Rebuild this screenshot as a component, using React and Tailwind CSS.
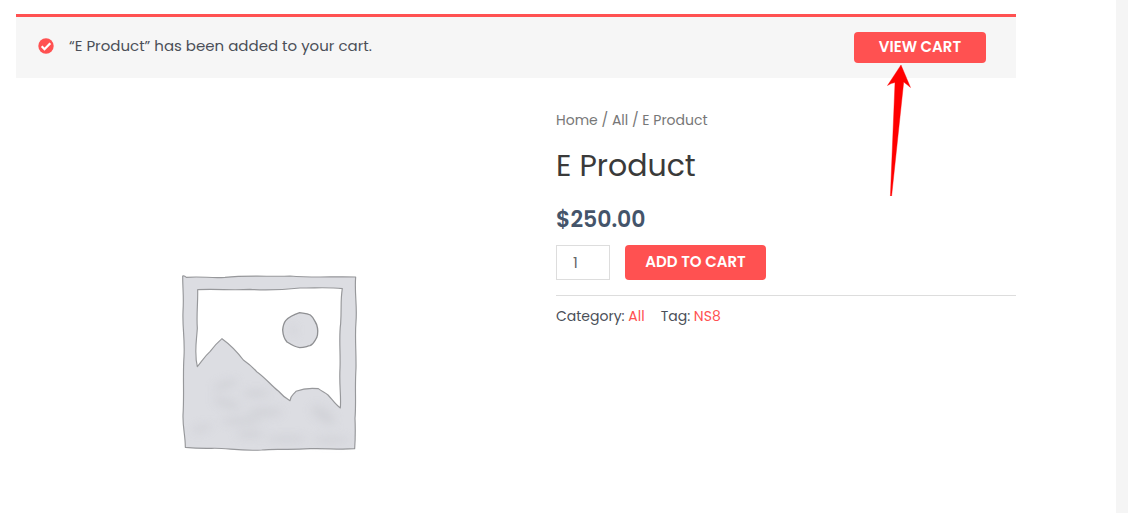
import React from "react";

function CheckBadge() {
  return (
    <svg viewBox="0 0 16 16" className="size-4 shrink-0" aria-hidden="true">
      <circle cx="8" cy="8" r="7.7" fill="#ff5151" />
      <path d="M3.7 8.3l2.8 2.9 5.8-6" fill="none" stroke="#fff" strokeWidth="2.3" />
    </svg>
  );
}

function PointerArrow() {
  return (
    <svg
      viewBox="0 0 26 132"
      className="pointer-events-none absolute top-8 left-8 h-[132px] w-[26px]"
      aria-hidden="true"
    >
      <path
        d="M15 1L24.5 23.5Q21 20.500 17.700 18L5.600 132H4.400L9 18.500Q5 19 1.500 21.500Z"
        fill="#f00"
        stroke="#f00"
        strokeWidth=".4"
      />
    </svg>
  );
}

function PlaceholderImage() {
  return (
    <svg viewBox="0 0 600 585" className="h-[195px] w-[200px]" role="img" aria-label="Awaiting product image">
      <defs>
        <filter id="soft" x="-40%" y="-80%" width="180%" height="260%">
          <feGaussianBlur stdDeviation="12" />
        </filter>
      </defs>
      <path
        d="M38 33Q43 31 49 37C95 33 120 40 165 37C235 30 310 36 360 33C430 39 490 34 557 36C553 85 562 120 558 170C554 215 559 260 558 310C554 370 559 410 555 460Q557 505 554 551C505 555 470 549 420 551C350 556 315 550 275 555C205 559 170 548 125 550Q85 551 46 547C46 510 38 490 39 450C43 390 38 330 42 275C45 220 37 190 39 140C42 95 38 75 38 33Z M83 74C84 115 79 150 82 190C79 235 72 265 82 305C95 290 102 276 120 260Q138 236 156 221C178 237 200 258 220 285Q242 300 260 320C283 335 304 362 325 378C337 392 346 399 360 407C361 392 368 391 378 379C393 373 410 367 445 371C455 379 465 383 474 390C486 402 495 418 511 429C514 390 507 360 510 310C512 260 506 220 512 175C515 130 511 105 517 71C475 66 445 69 390 69C340 74 300 77 240 73C185 77 145 71 83 74Z"
        fill="#dcdde2"
        stroke="#97989b"
        strokeWidth="3.500"
        strokeLinejoin="round"
        fillRule="evenodd"
      />
      <path
        d="M389 143C400 145 410 144 421 150C432 158 434 168 440 179C444 191 444 207 440 218C434 228 431 238 420 242C407 245 402 248 389 248C374 246 362 238 351 231C341 220 339 210 338 195C339 184 340 176 347 167C359 153 370 149 389 143Z"
        fill="#dcdde2"
        stroke="#8f9093"
        strokeWidth="4"
      />
      <g filter="url(#soft)" fill="#cbccd1" opacity=".55">
        <ellipse cx="165" cy="360" rx="38" ry="12" transform="rotate(-20 165 360)" />
        <ellipse cx="258" cy="385" rx="40" ry="12" />
        <ellipse cx="170" cy="415" rx="42" ry="14" transform="rotate(18 170 415)" />
        <ellipse cx="285" cy="442" rx="52" ry="14" />
        <ellipse cx="215" cy="468" rx="60" ry="12" />
        <ellipse cx="460" cy="450" rx="42" ry="20" transform="rotate(35 460 450)" />
        <ellipse cx="240" cy="508" rx="42" ry="12" />
        <ellipse cx="350" cy="522" rx="60" ry="11" />
        <ellipse cx="485" cy="525" rx="55" ry="10" />
        <ellipse cx="95" cy="490" rx="30" ry="10" transform="rotate(-15 95 490)" />
        <ellipse cx="370" cy="195" rx="7" ry="20" />
      </g>
    </svg>
  );
}

export default function App() {
  return (
    <div className="flex min-h-screen bg-[#f5f5f5] pr-3 font-['Poppins','Inter',sans-serif] text-[#4b4f58]">
      <main className="flex-1 bg-white pt-3.5 pr-[100px] pl-4">
        <div
          role="alert"
          className="flex items-start justify-between border-t-3 border-[#ff5151] bg-[#f6f6f6] pt-[15px] pr-[30px] pb-[15px] pl-[22px]"
        >
          <div className="flex items-center gap-[15px] text-[15px] leading-7">
            <CheckBadge />
            <p>“E Product” has been added to your cart.</p>
          </div>
          <div className="relative">
            <a
              href="#cart"
              className="flex h-[31px] w-[132px] items-center justify-center rounded bg-[#ff5151] text-[15px] font-semibold text-white"
            >
              VIEW CART
            </a>
            <PointerArrow />
          </div>
        </div>

        <div className="grid grid-cols-[11fr_10fr] gap-x-[34px] pt-8">
          <div className="flex justify-center pt-[155px] pl-0.5">
            <PlaceholderImage />
          </div>

          <section>
            <nav aria-label="Breadcrumb" className="text-sm leading-5 text-[#777]">
              <a href="#home">Home</a> / <a href="#all">All</a> / E Product
            </nav>
            <h1 className="mt-4 text-[30px] leading-10 font-normal text-[#3a3a3a]">E Product</h1>
            <p className="mt-[18px] text-[22px] leading-8 font-semibold text-[#44546a]">$250.00</p>
            <form className="mt-[9px] flex gap-[15px]" onSubmit={(e) => e.preventDefault()}>
              <input
                type="number"
                min="1"
                defaultValue="1"
                aria-label="Product quantity"
                className="h-[35px] w-[54px] [appearance:textfield] border border-[#ddd] bg-white pl-4 text-[15px] text-[#666] [&::-webkit-inner-spin-button]:appearance-none"
              />
              <button
                type="submit"
                className="h-[35px] w-[141px] rounded bg-[#ff5151] text-[15px] font-semibold text-white"
              >
                ADD TO CART
              </button>
            </form>
            <div className="mt-[15px] flex gap-4 border-t border-[#ddd] pt-2.5 text-sm leading-5">
              <span>
                Category: <a href="#all" className="text-[#ff5151]">All</a>
              </span>
              <span>
                Tag: <a href="#ns8" className="text-[#ff5151]">NS8</a>
              </span>
            </div>
          </section>
        </div>
      </main>
    </div>
  );
}
